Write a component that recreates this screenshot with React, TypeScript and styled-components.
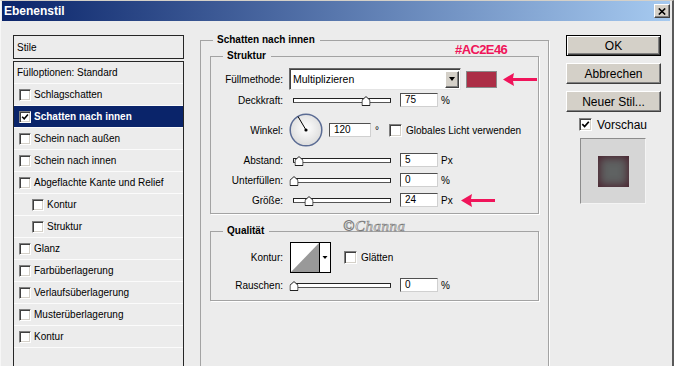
import styled, { createGlobalStyle } from "styled-components";

const GlobalStyle = createGlobalStyle`
  html, body {
    margin: 0;
    padding: 0;
    overflow: hidden;
    background: #ececec;
  }
  body {
    font-family: "Liberation Sans", Arial, sans-serif;
    font-size: 10px;
    color: #000;
  }
  * { box-sizing: border-box; }
`;

const Window = styled.div`
  width: 674px;
  height: 366px;
  overflow: hidden;
  background: #ececec;
  border-top: 1px solid #d4d0c8;
  border-left: 1px solid #f7f7f7;
  border-right: 2px solid #5a5a5a;
  display: flex;
  flex-direction: column;
`;

const TitleBar = styled.div`
  height: 20px;
  flex-shrink: 0;
  margin: 0 2px 0 1px;
  padding: 0 0 0 2px;
  display: flex;
  align-items: center;
  justify-content: space-between;
  background: linear-gradient(90deg, #0a246a 0%, #a6caf0 100%);
  color: #fff;
  font-size: 12px;
  font-weight: bold;
`;

const CloseBtn = styled.div`
  width: 16px;
  height: 14px;
  background: #d4d0c8;
  border: 1px solid;
  border-color: #fff #404040 #404040 #fff;
  box-shadow: inset -1px -1px 0 #808080;
  display: flex;
  align-items: center;
  justify-content: center;
`;

const Body = styled.div`
  flex: 1;
  min-height: 0;
  display: flex;
  padding: 14px 0 0 12px;
`;

/* ---------- left: styles list ---------- */

const LeftCol = styled.div`
  width: 171px;
  display: flex;
  flex-direction: column;
`;

const StileBox = styled.div`
  height: 24px;
  flex-shrink: 0;
  border: 1px solid #262626;
  padding-left: 3px;
  display: flex;
  align-items: center;
`;

const StyleList = styled.div`
  margin-top: 2px;
  flex: 1;
  border: 1px solid #262626;
  border-bottom: none;
`;

const ListRow = styled.div<{ $selected?: boolean; $pad: number }>`
  height: 22px;
  border-bottom: 1px solid #fbfbfb;
  padding-left: ${p => p.$pad}px;
  display: flex;
  align-items: center;
  background: ${p => (p.$selected ? "#0a246a" : "transparent")};
  color: ${p => (p.$selected ? "#fff" : "#000")};
  font-weight: ${p => (p.$selected ? "bold" : "normal")};
  white-space: nowrap;
`;

const RowText = styled.span`
  margin-left: 3px;
`;

const Box = styled.span<{ $size: number }>`
  width: ${p => p.$size}px;
  height: ${p => p.$size}px;
  flex-shrink: 0;
  background: #fff;
  border: 1px solid;
  border-color: #808080 #fff #fff #808080;
  box-shadow: inset 1px 1px 0 #404040, inset -1px -1px 0 #d4d0c8;
  display: flex;
  align-items: center;
  justify-content: center;
`;

const BoxSlot = styled.span<{ $ml: number }>`
  margin-left: ${p => p.$ml}px;
  display: flex;
`;

function CheckBox({ size, checked }: { size: number; checked?: boolean }) {
  return (
    <Box $size={size}>
      {checked && (
        <svg width={size - 4} height={size - 4} viewBox="0 0 9 9">
          <path d="M1.3 4.2 L3.6 6.6 L7.8 1.8" stroke="#000" strokeWidth="1.7" fill="none" />
        </svg>
      )}
    </Box>
  );
}

/* ---------- middle: settings ---------- */

const MiddleCol = styled.div`
  position: relative;
  margin: -1px 0 0 16px;
  width: 349px;
`;

const Group = styled.fieldset<{ $mt?: number; $pb?: number; $inset?: boolean }>`
  margin: ${p => p.$mt ?? 0}px ${p => (p.$inset ? 9 : 0)}px 0;
  padding: 0 0 ${p => p.$pb ?? 0}px;
  border: 1px solid #a3a3a3;
  box-shadow: 1px 1px 0 #fff;
  min-width: 0;
  height: ${p => (p.$inset ? "auto" : "360px")};
`;

const Legend = styled.legend`
  margin-left: 12px;
  padding: 0 5px 0 4px;
  font-weight: bold;
  font-size: 10px;
  line-height: 12px;
`;

const Field = styled.div<{ $h: number; $mt: number }>`
  display: flex;
  align-items: center;
  height: ${p => p.$h}px;
  margin-top: ${p => p.$mt}px;
  white-space: nowrap;
`;

const FieldLabel = styled.span`
  width: 72px;
  flex-shrink: 0;
  text-align: right;
`;

const Select = styled.div`
  margin-left: 6px;
  width: 172px;
  height: 22px;
  background: #fff;
  border: 1px solid;
  border-color: #6a6a6a #e4e4e4 #e4e4e4 #6a6a6a;
  box-shadow: inset 1px 1px 0 #404040;
  display: flex;
  align-items: center;
  padding-left: 3px;
  font-size: 10.5px;
`;

const DropBtn = styled.div`
  margin-left: auto;
  margin-right: 1px;
  width: 14px;
  height: 17px;
  background: #d4d0c8;
  border: 1px solid;
  border-color: #fff #404040 #404040 #fff;
  box-shadow: inset -1px -1px 0 #808080;
  display: flex;
  align-items: center;
  justify-content: center;
  &::after {
    content: "";
    border-left: 3.5px solid transparent;
    border-right: 3.5px solid transparent;
    border-top: 4px solid #000;
  }
`;

const Swatch = styled.div<{ $color: string }>`
  margin-left: 5px;
  width: 31px;
  height: 17px;
  background: ${p => p.$color};
  border: 1px solid #8a8a8a;
`;

const Track = styled.div`
  position: relative;
  margin-left: 10px;
  width: 98px;
  height: 5px;
  background: #fff;
  border: 1px solid #222;
  border-bottom-color: #555;
`;

const Thumb = styled.svg<{ $pos: number }>`
  position: absolute;
  top: -3px;
  left: ${p => p.$pos}%;
  transform: translateX(-50%);
`;

const ValueBox = styled.div<{ $w: number; $ml: number }>`
  margin-left: ${p => p.$ml}px;
  width: ${p => p.$w}px;
  height: 14px;
  background: #fff;
  border: 1px solid;
  border-color: #505050 #d0d0d0 #d0d0d0 #505050;
  padding-left: 4px;
  line-height: 12px;
`;

const Unit = styled.span<{ $ml?: number }>`
  margin-left: ${p => p.$ml ?? 3}px;
`;

const Arrow = styled.svg<{ $ml: number }>`
  margin-left: ${p => p.$ml}px;
  flex-shrink: 0;
`;

const Dial = styled.svg`
  margin-left: 6px;
  flex-shrink: 0;
`;

const ContourThumb = styled.svg`
  margin-left: 7px;
  flex-shrink: 0;
`;

const HexNote = styled.div`
  position: absolute;
  left: 255px;
  top: 9px;
  color: #f0145a;
  font-size: 13px;
  line-height: 13px;
  font-weight: bold;
  letter-spacing: -0.6px;
`;

const Watermark = styled.div`
  position: absolute;
  left: 143px;
  top: 185px;
  font-family: "Liberation Serif", serif;
  font-style: italic;
  font-size: 15px;
  line-height: 15px;
  color: #f2f2f2;
  -webkit-text-stroke: 0.6px #7a7a7a;
  letter-spacing: 0.5px;
`;

/* ---------- right: buttons ---------- */

const RightCol = styled.div`
  margin-left: 17px;
  width: 95px;
  display: flex;
  flex-direction: column;
  gap: 7px;
  font-size: 12px;
`;

const Btn = styled.div<{ $primary?: boolean }>`
  height: 21px;
  flex-shrink: 0;
  background: #d4d0c8;
  border: 1px solid;
  border-color: ${p => (p.$primary ? "#000" : "#fff #404040 #404040 #fff")};
  box-shadow: ${p =>
    p.$primary
      ? "inset 1px 1px 0 #fff, inset -1px -1px 0 #404040, inset -2px -2px 0 #808080"
      : "inset -1px -1px 0 #808080"};
  display: flex;
  align-items: center;
  justify-content: center;
`;

const PreviewToggle = styled.div`
  margin-top: -1px;
  padding-left: 13px;
  display: flex;
  align-items: center;
  gap: 5px;
  height: 13px;
  flex-shrink: 0;
`;

const PreviewBox = styled.div`
  margin: 0 0 0 14px;
  width: 66px;
  height: 66px;
  flex-shrink: 0;
  background: #d6d6d6;
  border: 1px solid;
  border-color: #8c8c8c #f4f4f4 #f4f4f4 #8c8c8c;
  display: flex;
  align-items: center;
  justify-content: center;
`;

const PreviewSwatch = styled.div`
  width: 31px;
  height: 31px;
  background: #5f6262;
  box-shadow: inset 0 0 9px 2px #4b2430;
`;

const layers = [
  { label: "Schlagschatten" },
  { label: "Schatten nach innen", selected: true },
  { label: "Schein nach außen" },
  { label: "Schein nach innen" },
  { label: "Abgeflachte Kante und Relief" },
  { label: "Kontur", indent: true },
  { label: "Struktur", indent: true },
  { label: "Glanz" },
  { label: "Farbüberlagerung" },
  { label: "Verlaufsüberlagerung" },
  { label: "Musterüberlagerung" },
  { label: "Kontur" },
];

function Slider({ pos }: { pos: number }) {
  return (
    <Track>
      <Thumb $pos={pos} width="9" height="10" viewBox="0 0 9 10">
        <path d="M0.5 9.5 V4.2 L4.5 0.6 L8.5 4.2 V9.5 Z" fill="#fff" stroke="#222" />
      </Thumb>
    </Track>
  );
}

function PinkArrow({ ml }: { ml: number }) {
  return (
    <Arrow $ml={ml} width="34" height="15" viewBox="0 0 34 15">
      <path d="M0 7.5 L11 1 L10 6 L34 6 L34 9 L10 9 L11 14 Z" fill="#f0145a" />
    </Arrow>
  );
}

function App() {
  return (
    <>
      <GlobalStyle />
      <Window>
        <TitleBar>
          Ebenenstil
          <CloseBtn>
            <svg width="8" height="7" viewBox="0 0 8 7">
              <path d="M0.8 0.5 L7.2 6.5 M7.2 0.5 L0.8 6.5" stroke="#000" strokeWidth="1.6" />
            </svg>
          </CloseBtn>
        </TitleBar>

        <Body>
          <LeftCol>
            <StileBox>Stile</StileBox>
            <StyleList>
              <ListRow $pad={3}>Fülloptionen: Standard</ListRow>
              {layers.map((l, i) => (
                <ListRow key={i} $pad={l.indent ? 18 : 5} $selected={l.selected}>
                  <CheckBox size={12} checked={l.selected} />
                  <RowText>{l.label}</RowText>
                </ListRow>
              ))}
            </StyleList>
          </LeftCol>

          <MiddleCol>
            <Group>
              <Legend>Schatten nach innen</Legend>

              <Group $inset $mt={4} $pb={6}>
                <Legend>Struktur</Legend>
                <Field $h={22} $mt={6}>
                  <FieldLabel>Füllmethode:</FieldLabel>
                  <Select>
                    Multiplizieren
                    <DropBtn />
                  </Select>
                  <Swatch $color="#ac2e46" />
                  <PinkArrow ml={6} />
                </Field>
                <Field $h={14} $mt={3}>
                  <FieldLabel>Deckkraft:</FieldLabel>
                  <Slider pos={75} />
                  <ValueBox $w={38} $ml={9}>75</ValueBox>
                  <Unit>%</Unit>
                </Field>
                <Field $h={34} $mt={6}>
                  <FieldLabel>Winkel:</FieldLabel>
                  <Dial width="34" height="34" viewBox="0 0 34 34">
                    <defs>
                      <radialGradient id="dialFill" cx="50%" cy="45%" r="55%">
                        <stop offset="0%" stopColor="#ffffff" />
                        <stop offset="100%" stopColor="#dcdcdc" />
                      </radialGradient>
                    </defs>
                    <circle cx="17" cy="17" r="15.8" fill="url(#dialFill)" stroke="#5b6c94" strokeWidth="1.5" />
                    <line x1="17" y1="17" x2="9" y2="3.5" stroke="#000" strokeWidth="1" />
                    <circle cx="17" cy="17" r="1.6" fill="#000" />
                  </Dial>
                  <ValueBox $w={42} $ml={6}>120</ValueBox>
                  <Unit $ml={4}>°</Unit>
                  <BoxSlot $ml={10}>
                    <CheckBox size={13} />
                  </BoxSlot>
                  <Unit $ml={4}>Globales Licht verwenden</Unit>
                </Field>
                <Field $h={14} $mt={6}>
                  <FieldLabel>Abstand:</FieldLabel>
                  <Slider pos={5} />
                  <ValueBox $w={38} $ml={9}>5</ValueBox>
                  <Unit>Px</Unit>
                </Field>
                <Field $h={14} $mt={6}>
                  <FieldLabel>Unterfüllen:</FieldLabel>
                  <Slider pos={0} />
                  <ValueBox $w={38} $ml={9}>0</ValueBox>
                  <Unit>%</Unit>
                </Field>
                <Field $h={14} $mt={6}>
                  <FieldLabel>Größe:</FieldLabel>
                  <Slider pos={16} />
                  <ValueBox $w={38} $ml={9}>24</ValueBox>
                  <Unit>Px</Unit>
                  <PinkArrow ml={8} />
                </Field>
              </Group>

              <Group $inset $mt={11} $pb={8}>
                <Legend>Qualität</Legend>
                <Field $h={31} $mt={5}>
                  <FieldLabel>Kontur:</FieldLabel>
                  <ContourThumb width="41" height="31" viewBox="0 0 41 31">
                    <rect x="0.5" y="0.5" width="40" height="30" fill="#fff" stroke="#000" />
                    <polygon points="1,30 29,1 29,30" fill="#999" />
                    <line x1="29.5" y1="0.5" x2="29.5" y2="30.5" stroke="#000" />
                    <polygon points="32.5,14 37.5,14 35,17" fill="#000" />
                  </ContourThumb>
                  <BoxSlot $ml={13}>
                    <CheckBox size={13} />
                  </BoxSlot>
                  <Unit $ml={4}>Glätten</Unit>
                </Field>
                <Field $h={14} $mt={5}>
                  <FieldLabel>Rauschen:</FieldLabel>
                  <Slider pos={0} />
                  <ValueBox $w={38} $ml={9}>0</ValueBox>
                  <Unit>%</Unit>
                </Field>
              </Group>
            </Group>

            <HexNote>#AC2E46</HexNote>
            <Watermark>©Channa</Watermark>
          </MiddleCol>

          <RightCol>
            <Btn $primary>OK</Btn>
            <Btn>Abbrechen</Btn>
            <Btn>Neuer Stil...</Btn>
            <PreviewToggle>
              <CheckBox size={13} checked />
              Vorschau
            </PreviewToggle>
            <PreviewBox>
              <PreviewSwatch />
            </PreviewBox>
          </RightCol>
        </Body>
      </Window>
    </>
  );
}

export default App;
